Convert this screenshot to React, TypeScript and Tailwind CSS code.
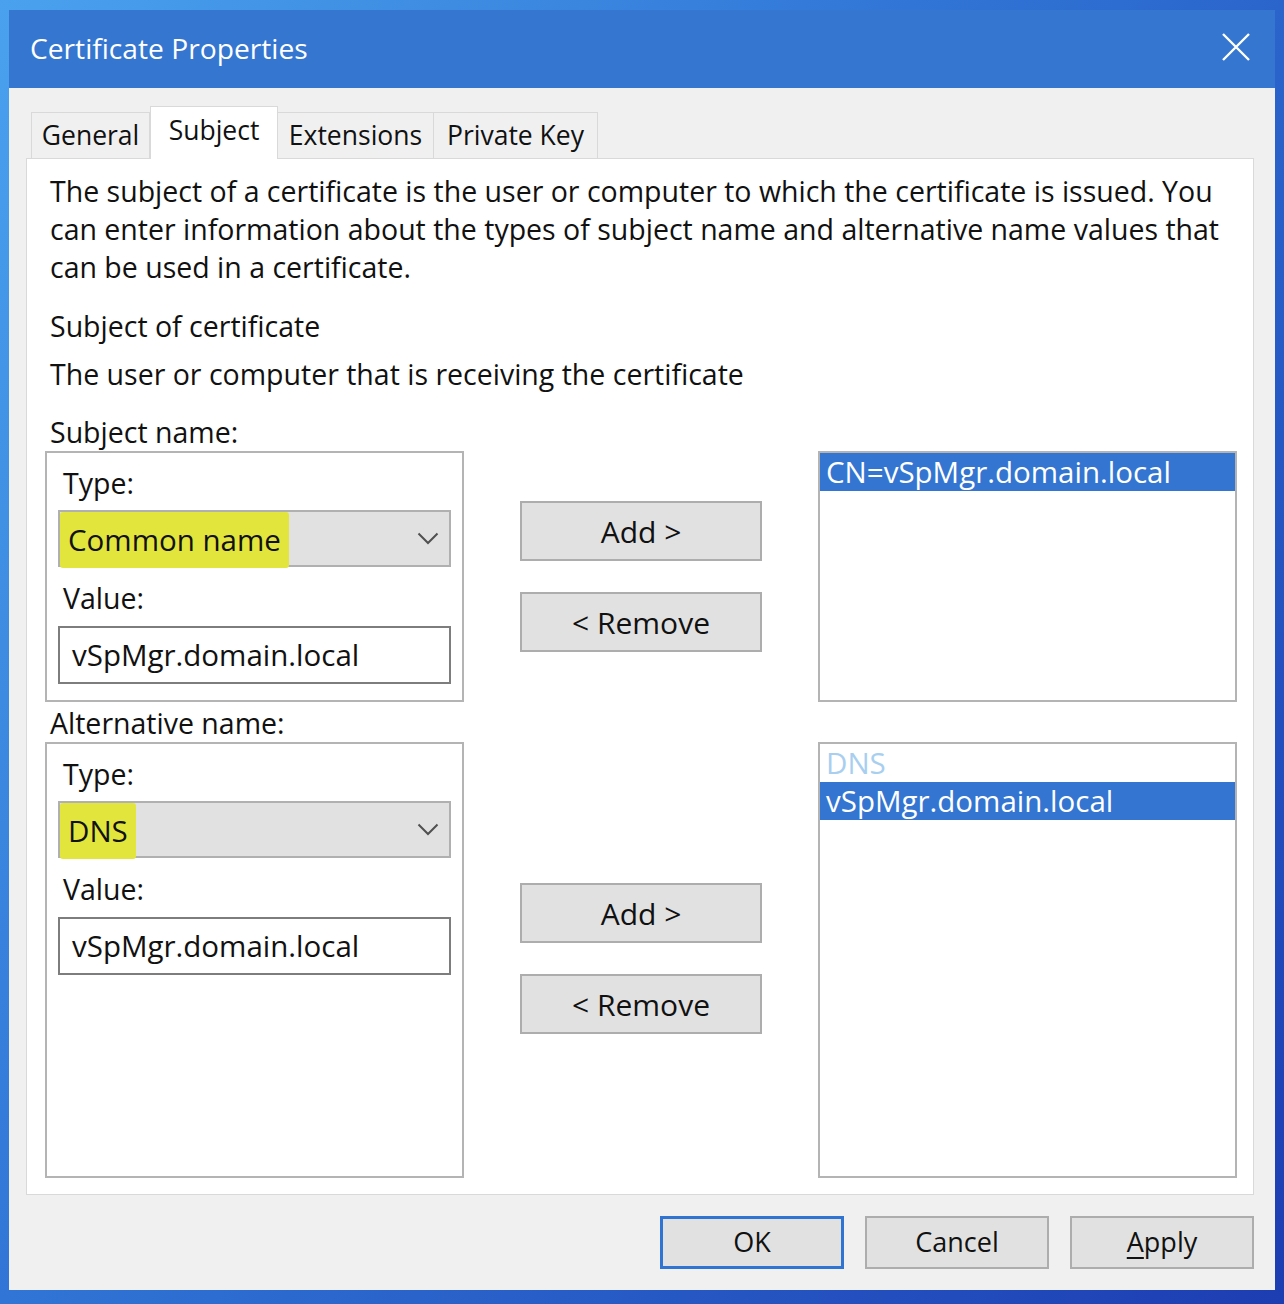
function Chevron() {
  return (
    <svg width="22" height="13" viewBox="0 0 22 13" fill="none" className="shrink-0">
      <path d="M1.5 1.5 L11 11 L20.5 1.5" stroke="#505050" strokeWidth="2" />
    </svg>
  );
}

function CloseIcon() {
  return (
    <svg width="30" height="30" viewBox="0 0 30 30" fill="none">
      <path d="M2 2 L28 28 M28 2 L2 28" stroke="#ffffff" strokeWidth="2.4" />
    </svg>
  );
}

function Dropdown({ value, hlWidth }: { value: string; hlWidth: string }) {
  return (
    <div className="ml-[11px] mr-[11px] flex h-[57px] items-center justify-between border-2 border-[#b0b0b0] bg-[#e1e1e1] pr-[10px]">
      <span className={`${hlWidth} flex h-[56px] items-center self-stretch rounded-[3px] bg-[#e2e53c] pl-[8px] text-[29.5px]`}>
        {value}
      </span>
      <Chevron />
    </div>
  );
}

function TextBox({ value }: { value: string }) {
  return (
    <div className="ml-[11px] mr-[11px] flex h-[58px] items-center border-2 border-[#7d7d7d] bg-white pl-[12px] text-[29.5px]">
      {value}
    </div>
  );
}

function NameGroup({ type, hlWidth, height }: { type: string; hlWidth: string; height: string }) {
  return (
    <div className={`${height} border-2 border-[#b4b4b4] bg-white`}>
      <div className="pl-[16px] pt-[11px] leading-[38px]">Type:</div>
      <div className="mt-[8px]">
        <Dropdown value={type} hlWidth={hlWidth} />
      </div>
      <div className="mt-[12px] pl-[16px] leading-[38px]">Value:</div>
      <div className="mt-[9px]">
        <TextBox value="vSpMgr.domain.local" />
      </div>
    </div>
  );
}

function PushButton({ label }: { label: string }) {
  return (
    <button className="flex h-[60px] w-[242px] items-center justify-center border-2 border-[#adadad] bg-[#e1e1e1] text-[30px]">
      {label}
    </button>
  );
}

function ButtonPair({ top }: { top: string }) {
  return (
    <div className={`${top} flex flex-col gap-[31px]`}>
      <PushButton label="Add >" />
      <PushButton label="< Remove" />
    </div>
  );
}

function ListBox({ height, children }: { height: string; children: React.ReactNode }) {
  return (
    <div className={`${height} border-2 border-[#b4b4b4] bg-white text-[29.5px] leading-[38px]`}>{children}</div>
  );
}

const tabs = ["General", "Subject", "Extensions", "Private Key"];
const tabWidths = ["w-[119px]", "w-[128px]", "w-[157px]", "w-[165px]"];

export default function App() {
  return (
    <div className="h-[1304px] w-[1284px] bg-[linear-gradient(125deg,#4aa2ee_0%,#2f72d4_45%,#1d3db2_100%)] pb-[14px] pl-[9px] pr-[9px] pt-[10px] font-['Open_Sans',sans-serif] text-[28.5px] text-[#111]">
      <div className="flex h-full flex-col">
        <div className="flex h-[78px] shrink-0 items-center justify-between bg-[#3476d0] pl-[21px] pr-[24px] text-white">
          <span className="pb-[2px] text-[28.2px]">Certificate Properties</span>
          <span className="pb-[4px]">
            <CloseIcon />
          </span>
        </div>

        <div className="flex flex-1 flex-col bg-[#f0f0f0] pl-[17px] pr-[21px]">
          <div className="ml-[5px] mt-[18px] flex items-end text-[26.5px]">
            {tabs.map((t, i) =>
              t === "Subject" ? (
                <div
                  key={t}
                  className={`${tabWidths[i]} relative z-10 -mb-px flex h-[53px] items-center justify-center border border-b-0 border-[#d9d9d9] bg-white pb-[4px]`}
                >
                  {t}
                </div>
              ) : (
                <div
                  key={t}
                  className={`${tabWidths[i]} flex h-[46px] items-center justify-center border border-b-0 border-[#d9d9d9] bg-[#f0f0f0] ${i === 0 ? "" : "-ml-px"}`}
                >
                  {t}
                </div>
              ),
            )}
          </div>

          <div className="h-[1037px] border border-[#d9d9d9] bg-white pl-[18px] pt-[13px]">
            <p className="whitespace-nowrap pl-[5px] leading-[38px]">
              The subject of a certificate is the user or computer to which the certificate is issued. You
              <br />
              can enter information about the types of subject name and alternative name values that
              <br />
              can be used in a certificate.
            </p>
            <div className="mt-[21px] pl-[5px] leading-[38px]">Subject of certificate</div>
            <div className="mt-[10px] pl-[5px] leading-[38px]">The user or computer that is receiving the certificate</div>

            <div className="mt-[20px] pl-[5px] leading-[38px]">Subject name:</div>
            <div className="grid grid-cols-[419px_242px_419px] gap-x-[56px]">
              <NameGroup type="Common name" hlWidth="w-[229px]" height="h-[251px]" />
              <ButtonPair top="pt-[50px]" />
              <ListBox height="h-[251px]">
                <div className="bg-[#3375d1] pl-[6px] text-white">CN=vSpMgr.domain.local</div>
              </ListBox>
            </div>

            <div className="mt-[2px] pl-[5px] leading-[38px]">Alternative name:</div>
            <div className="grid grid-cols-[419px_242px_419px] gap-x-[56px]">
              <NameGroup type="DNS" hlWidth="w-[76px]" height="h-[436px]" />
              <ButtonPair top="pt-[141px]" />
              <ListBox height="h-[436px]">
                <div className="pl-[6px] text-[#a8cff0]">DNS</div>
                <div className="bg-[#3375d1] pl-[6px] text-white">vSpMgr.domain.local</div>
              </ListBox>
            </div>
          </div>

          <div className="mt-[21px] flex justify-end gap-[21px] text-[27px]">
            <button className="flex h-[53px] w-[184px] items-center justify-center border-[3px] border-[#2f74d2] bg-[#e1e1e1]">
              OK
            </button>
            <button className="flex h-[53px] w-[184px] items-center justify-center border-2 border-[#adadad] bg-[#e1e1e1]">
              Cancel
            </button>
            <button className="flex h-[53px] w-[184px] items-center justify-center border-2 border-[#adadad] bg-[#e1e1e1]">
              <span>
                <span className="underline underline-offset-[5px]">A</span>pply
              </span>
            </button>
          </div>
        </div>
      </div>
    </div>
  );
}
